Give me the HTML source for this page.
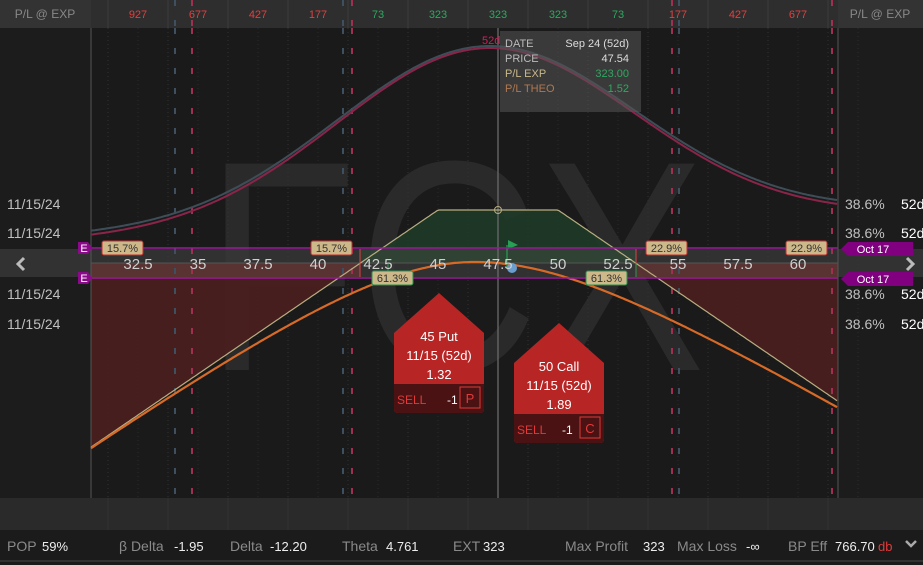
<!DOCTYPE html>
<html><head><meta charset="utf-8"><style>
html,body{margin:0;padding:0;background:#1a1a1a;width:923px;height:565px;overflow:hidden}
svg{display:block;font-family:"Liberation Sans",sans-serif}
</style></head><body>
<svg id="s" width="923" height="565" viewBox="0 0 923 565" xmlns="http://www.w3.org/2000/svg">
<rect width="923" height="565" fill="#1a1a1a"/>
<rect x="0" y="28" width="91" height="470" fill="#1c1c1c"/>
<rect x="838" y="28" width="85" height="470" fill="#1c1c1c"/>
<text x="205" y="370" font-size="300" fill="#2a2a2a" textLength="500" lengthAdjust="spacingAndGlyphs">FCX</text>
<g id="grid"></g>
<path id="gfill" fill="#1f3a27" opacity="0.9"/>
<path id="rfill" fill="#4a1f1f" opacity="0.95"/>
<rect x="0" y="249" width="923" height="28" fill="#3a3a3a" opacity="0.75"/>
<rect x="91" y="263" width="269" height="14" fill="#5e3232" opacity="0.85"/>
<rect x="636" y="263" width="202" height="14" fill="#5e3232" opacity="0.85"/>
<rect x="360" y="249" width="276" height="14" fill="#2d4a35" opacity="0.6"/>
<line x1="91" y1="263" x2="838" y2="263" stroke="#555" stroke-width="1"/>
<g id="dash"></g>
<line x1="498" y1="28" x2="498" y2="498" stroke="#6a6a6a" stroke-width="1.3"/>
<line x1="91" y1="28" x2="91" y2="498" stroke="#555"/>
<line x1="838" y1="28" x2="838" y2="498" stroke="#555"/>
<path id="blue" fill="none" stroke="#3e4e58" stroke-width="2"/>
<path id="red" fill="none" stroke="#8a2448" stroke-width="2"/>
<path id="exp" fill="none" stroke="#b8ad80" stroke-width="1.2"/>
<path id="theo" fill="none" stroke="#d86a28" stroke-width="2.2"/>
<circle cx="498" cy="210" r="3.5" fill="none" stroke="#b8ad80" stroke-width="1"/>
<line x1="360" y1="249" x2="360" y2="277" stroke="#e04040"/>
<line x1="636" y1="249" x2="636" y2="277" stroke="#e04040"/>
<line x1="388" y1="263" x2="388" y2="277" stroke="#2a9a50"/>
<line x1="636" y1="263" x2="636" y2="277" stroke="#2a9a50"/>
<line x1="507" y1="245" x2="507" y2="268" stroke="#27a055" stroke-width="1.2"/>
<path d="M508 240 L518 245 L508 249 Z" fill="#27a055"/>
<circle cx="512" cy="268" r="5" fill="#6a9ecf"/>
<g font-size="15" fill="#cfcfcf" text-anchor="middle">
<text x="138" y="269">32.5</text><text x="198" y="269">35</text><text x="258" y="269">37.5</text><text x="318" y="269">40</text>
<text x="378" y="269">42.5</text><text x="438" y="269">45</text><text x="498" y="269">47.5</text><text x="558" y="269">50</text>
<text x="618" y="269">52.5</text><text x="678" y="269">55</text><text x="738" y="269">57.5</text><text x="798" y="269">60</text>
</g>
<path d="M24 258 L18 264 L24 270" fill="none" stroke="#bbb" stroke-width="3"/>
<path d="M907 258 L913 264 L907 270" fill="none" stroke="#bbb" stroke-width="3"/>
<line x1="91" y1="248" x2="838" y2="248" stroke="#9a1a9a" stroke-width="1.5"/>
<line x1="91" y1="278" x2="838" y2="278" stroke="#9a1a9a" stroke-width="1.5"/>
<path d="M78 242 H88 L92 248 L88 254 H78 Z" fill="#8a0a8a"/><text x="84" y="252" font-size="11" fill="#fff" text-anchor="middle">E</text>
<path d="M78 272 H88 L92 278 L88 284 H78 Z" fill="#8a0a8a"/><text x="84" y="282" font-size="11" fill="#fff" text-anchor="middle">E</text>
<path d="M848 242 H913 V256 H848 L841 249 Z" fill="#800080"/><text x="873" y="253" font-size="11" fill="#fff" text-anchor="middle">Oct 17</text>
<path d="M848 272 H913 V286 H848 L841 279 Z" fill="#800080"/><text x="873" y="283" font-size="11" fill="#fff" text-anchor="middle">Oct 17</text>
<g font-size="11" fill="#333" text-anchor="middle">
<rect x="102" y="241" width="41" height="14" rx="2" fill="#cdb88a" stroke="#c03030"/><text x="122.5" y="252">15.7%</text>
<rect x="311" y="241" width="41" height="14" rx="2" fill="#cdb88a" stroke="#c03030"/><text x="331.5" y="252">15.7%</text>
<rect x="646" y="241" width="41" height="14" rx="2" fill="#cdb88a" stroke="#c03030"/><text x="666.5" y="252">22.9%</text>
<rect x="786" y="241" width="41" height="14" rx="2" fill="#cdb88a" stroke="#c03030"/><text x="806.5" y="252">22.9%</text>
<rect x="372" y="271" width="41" height="14" rx="2" fill="#cdb88a" stroke="#2a9050"/><text x="392.5" y="282">61.3%</text>
<rect x="586" y="271" width="41" height="14" rx="2" fill="#cdb88a" stroke="#2a9050"/><text x="606.5" y="282">61.3%</text>
</g>
<g font-size="14" fill="#c0c0c0">
<text x="7" y="209">11/15/24</text><text x="7" y="238">11/15/24</text><text x="7" y="299">11/15/24</text><text x="7" y="329">11/15/24</text>
<text x="845" y="209">38.6%</text><text x="845" y="238">38.6%</text><text x="845" y="299">38.6%</text><text x="845" y="329">38.6%</text>
</g>
<g font-size="14" fill="#fff">
<text x="901" y="209">52d</text><text x="901" y="238">52d</text><text x="901" y="299">52d</text><text x="901" y="329">52d</text>
</g>
<rect x="500" y="31" width="141" height="81" fill="#555" opacity="0.55"/>
<text x="482" y="44" font-size="11" fill="#d0205a">52d</text>
<g font-size="11">
<text x="505" y="47" fill="#bbb">DATE</text><text x="629" y="47" fill="#ddd" text-anchor="end">Sep 24 (52d)</text>
<text x="505" y="62" fill="#bbb">PRICE</text><text x="629" y="62" fill="#ddd" text-anchor="end">47.54</text>
<text x="505" y="77" fill="#c8b88a">P/L EXP</text><text x="629" y="77" fill="#2ea860" text-anchor="end">323.00</text>
<text x="505" y="92" fill="#b07850">P/L THEO</text><text x="629" y="92" fill="#2ea860" text-anchor="end">1.52</text>
</g>
<g>
<path d="M394 333 L439 293 L484 333 V409 Q484 413 480 413 H398 Q394 413 394 409 Z" fill="#b82525"/>
<path d="M394 384 H484 V409 Q484 413 480 413 H398 Q394 413 394 409 Z" fill="#4a1212"/>
<g font-size="13" fill="#fff" text-anchor="middle"><text x="439" y="341">45 Put</text><text x="439" y="360">11/15 (52d)</text><text x="439" y="379">1.32</text></g>
<text x="397" y="404" font-size="12" fill="#e03a3a">SELL</text><text x="447" y="404" font-size="12" fill="#fff">-1</text>
<rect x="460" y="387" width="20" height="21" fill="none" stroke="#e03a3a"/><text x="470" y="403" font-size="13" fill="#e03a3a" text-anchor="middle">P</text>
<path d="M514 363 L559 323 L604 363 V439 Q604 443 600 443 H518 Q514 443 514 439 Z" fill="#b82525"/>
<path d="M514 414 H604 V439 Q604 443 600 443 H518 Q514 443 514 439 Z" fill="#4a1212"/>
<g font-size="13" fill="#fff" text-anchor="middle"><text x="559" y="371">50 Call</text><text x="559" y="390">11/15 (52d)</text><text x="559" y="409">1.89</text></g>
<text x="517" y="434" font-size="12" fill="#e03a3a">SELL</text><text x="562" y="434" font-size="12" fill="#fff">-1</text>
<rect x="580" y="417" width="20" height="21" fill="none" stroke="#e03a3a"/><text x="590" y="433" font-size="13" fill="#e03a3a" text-anchor="middle">C</text>
</g>
<rect x="0" y="498" width="923" height="32" fill="#2a2a2a"/>
<g id="bband"></g>
<rect x="0" y="0" width="923" height="28" fill="#2e2e2e"/>
<rect x="0" y="0" width="91" height="28" fill="#333"/>
<rect x="838" y="0" width="85" height="28" fill="#333"/>
<g id="hsep"></g>
<g font-size="11" text-anchor="middle">
<text x="45" y="18" fill="#888" font-size="12">P/L @ EXP</text><text x="880" y="18" fill="#888" font-size="12">P/L @ EXP</text>
<text x="138" y="18" fill="#e04040">927</text><text x="198" y="18" fill="#e04040">677</text><text x="258" y="18" fill="#e04040">427</text><text x="318" y="18" fill="#e04040">177</text>
<text x="378" y="18" fill="#2ea860">73</text><text x="438" y="18" fill="#2ea860">323</text><text x="498" y="18" fill="#2ea860">323</text><text x="558" y="18" fill="#2ea860">323</text>
<text x="618" y="18" fill="#2ea860">73</text><text x="678" y="18" fill="#e04040">177</text><text x="738" y="18" fill="#e04040">427</text><text x="798" y="18" fill="#e04040">677</text>
</g>
<g id="hdash"></g>
<rect x="0" y="530" width="923" height="35" fill="#1b1b1b"/>
<line x1="0" y1="561" x2="923" y2="561" stroke="#3a3a3a" stroke-width="1.5"/>
<g font-size="14" fill="#8a8a8a">
<text x="7" y="551">POP</text><text x="119" y="551">β Delta</text><text x="230" y="551">Delta</text><text x="342" y="551">Theta</text><text x="453" y="551">EXT</text>
<text x="565" y="551">Max Profit</text><text x="677" y="551">Max Loss</text><text x="788" y="551">BP Eff</text>
</g>
<g font-size="13" fill="#eee">
<text x="42" y="551">59%</text><text x="174" y="551">-1.95</text><text x="270" y="551">-12.20</text><text x="386" y="551">4.761</text><text x="483" y="551">323</text>
<text x="643" y="551">323</text><text x="746" y="551">-∞</text><text x="835" y="551">766.70</text>
</g>
<text x="878" y="551" font-size="13" fill="#e03a3a">db</text>
<path d="M906 541 L911 546 L916 541" fill="none" stroke="#aaa" stroke-width="2.5"/>
</svg>
<script>
var NS="http://www.w3.org/2000/svg";
function el(p,t,a){var e=document.createElementNS(NS,t);for(var k in a)e.setAttribute(k,a[k]);document.getElementById(p).appendChild(e);}
for(var x=108;x<=828;x+=60){el("grid","line",{x1:x,y1:28,x2:x,y2:498,stroke:"#333","stroke-dasharray":"1,3"});el("grid","line",{x1:x+30,y1:28,x2:x+30,y2:498,stroke:"#2b2b2b","stroke-dasharray":"1,3"});
el("hsep","line",{x1:x,y1:0,x2:x,y2:28,stroke:"#3c3c3c"});el("bband","line",{x1:x,y1:498,x2:x,y2:530,stroke:"#333"});}
[[175,"#3e5060"],[192,"#a03050"],[343,"#3e5060"],[352,"#a03050"],[672,"#a03050"],[679,"#3e5060"],[832,"#a03050"]].forEach(function(d){
el("dash","line",{x1:d[0],y1:28,x2:d[0],y2:530,stroke:d[1],"stroke-width":2,"stroke-dasharray":"6,14"});
el("hdash","line",{x1:d[0],y1:0,x2:d[0],y2:28,stroke:d[1],"stroke-width":2,"stroke-dasharray":"6,14"});});
function px(x){return 32.5+(x-138)/24;}
function ey(x){var p=px(x);var pl=323-100*Math.max(0,45-p)-100*Math.max(0,p-50);return 263-0.164*pl;}
var e="",t="",b="",rd="";
for(var x=91;x<=838;x+=2){var y=ey(x);e+=(x==91?"M":"L")+x+" "+y.toFixed(1);
var dx=x-475,k=dx<0?0.71:0.60;t+=(x==91?"M":"L")+x+" "+(262+k*(Math.sqrt(dx*dx+22500)-150)).toFixed(1);
var base=240+(x-91)/(747)*(-25);var gg=Math.exp(-Math.pow((x-490)/211,2));
rd+=(x==91?"M":"L")+x+" "+(base-(base-48)*gg).toFixed(1);
b+=(x==91?"M":"L")+x+" "+(base-4-(base-50)*gg).toFixed(1);}
document.getElementById("exp").setAttribute("d",e);
document.getElementById("theo").setAttribute("d",t);
document.getElementById("red").setAttribute("d",rd);
document.getElementById("blue").setAttribute("d",b);
var gp="M360.5 263";for(var x=362;x<=635;x+=2)gp+="L"+x+" "+ey(x).toFixed(1);gp+="L635.5 263Z";
document.getElementById("gfill").setAttribute("d",gp);
var rp="M91 263";for(var x=91;x<=360;x+=2)rp+="L"+x+" "+ey(x).toFixed(1);rp+="L360.5 263Z M636 263";
for(var x=636;x<=838;x+=2)rp+="L"+x+" "+ey(x).toFixed(1);rp+="L838 263Z";
document.getElementById("rfill").setAttribute("d",rp);
</script>
</body></html>
